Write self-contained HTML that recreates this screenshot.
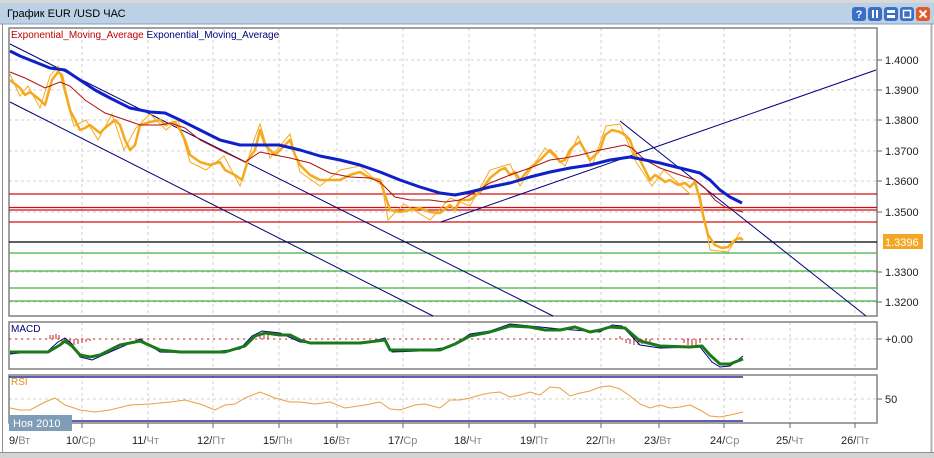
<!DOCTYPE html>
<html><head><meta charset="utf-8"><style>
body{margin:0;width:934px;height:458px;background:#fff;overflow:hidden;font-family:"Liberation Sans","DejaVu Sans",sans-serif}
</style></head><body>
<svg width="934" height="458" viewBox="0 0 934 458" xmlns="http://www.w3.org/2000/svg" style="position:absolute;left:0;top:0">
<rect x="0" y="0" width="934" height="458" fill="#fff"/>
<rect x="0" y="0" width="934" height="3" fill="#d8d8d8"/>
<rect x="0" y="3" width="934" height="21" fill="#bcd0e6"/>
<line x1="0" y1="24" x2="934" y2="24" stroke="#8aa2bc"/>
<text x="7" y="17" font-size="11" fill="#000" font-family="Liberation Sans, DejaVu Sans, sans-serif">График EUR /USD  ЧАС</text>
<g>
<rect x="852" y="7" width="14" height="14" rx="3" fill="#3a6fc8"/><text x="859" y="18" font-size="11" font-weight="bold" fill="#fff" text-anchor="middle">?</text>
<rect x="868" y="7" width="14" height="14" rx="3" fill="#3a6fc8"/><rect x="872" y="10" width="2" height="8" fill="#fff"/><rect x="876" y="10" width="2" height="8" fill="#fff"/>
<rect x="884" y="7" width="14" height="14" rx="3" fill="#3a6fc8"/><rect x="887" y="10" width="8" height="3" fill="#fff"/><rect x="887" y="15" width="8" height="3" fill="#fff"/>
<rect x="900" y="7" width="14" height="14" rx="3" fill="#3a6fc8"/><rect x="903.5" y="10.5" width="7" height="7" fill="none" stroke="#fff" stroke-width="1.5"/>
<rect x="916" y="7" width="14" height="14" rx="3" fill="#e05a2a"/><path d="M919.5 10.5 L926.5 17.5 M926.5 10.5 L919.5 17.5" stroke="#fff" stroke-width="2"/>
</g>
<line x1="931.5" y1="24" x2="931.5" y2="458" stroke="#b0b0b0" stroke-width="2"/>
<line x1="2.5" y1="24" x2="2.5" y2="452" stroke="#909090"/>
<rect x="0" y="452" width="934" height="6" fill="#d4d4d4"/>
<line x1="0" y1="452.5" x2="934" y2="452.5" stroke="#909090"/>

<g stroke="#d0d0d0" stroke-dasharray="3,3" stroke-width="1">
<path d="M82 28V316M148 28V316M213 28V316M279 28V316M337 28V316M403 28V316M469 28V316M535 28V316M601 28V316M659 28V316M724 28V316M790 28V316M855 28V316"/>
<path d="M82 322V369M148 322V369M213 322V369M279 322V369M337 322V369M403 322V369M469 322V369M535 322V369M601 322V369M659 322V369M724 322V369M790 322V369M855 322V369"/>
<path d="M82 375V423M148 375V423M213 375V423M279 375V423M337 375V423M403 375V423M469 375V423M535 375V423M601 375V423M659 375V423M724 375V423M790 375V423M855 375V423"/>
<path d="M9 60H877M9 90H877M9 120H877M9 151H877M9 181H877M9 212H877M9 242H877M9 272H877M9 302H877"/>
<path d="M9 339H877M9 399H877"/>
</g>
<g fill="none" stroke="#808080" stroke-width="1.5">
<rect x="9" y="28" width="868" height="288"/>
<rect x="9" y="322" width="868" height="47"/>
<rect x="9" y="375" width="868" height="48"/>
</g>
<g stroke="#666" stroke-width="1"><path d="M877 60h5M877 90h5M877 120h5M877 151h5M877 181h5M877 212h5M877 272h5M877 302h5M877 339h5M877 399h5"/>
<path d="M15 423v5M82 423v5M148 423v5M213 423v5M279 423v5M337 423v5M403 423v5M469 423v5M535 423v5M601 423v5M659 423v5M724 423v5M790 423v5M855 423v5"/></g>

<g stroke-width="1.3">
<path d="M9 194H877M9 207.5H877M9 210H877M9 222H877" stroke="#d01010"/>
<path d="M9 242H877" stroke="#000"/>
<path d="M9 253H877M9 271H877M9 288H877M9 301H877" stroke="#40b040"/>
</g>
<g stroke="#00007a" stroke-width="1" fill="none">
<path d="M10 44L553 316"/><path d="M10 102L433 316"/><path d="M441 222L876 70"/><path d="M620 121L866 316"/>
</g>

<polyline fill="none" stroke="#f5aa1e" stroke-width="2.5" stroke-linejoin="round" points="10,80 20,88 25,95 30,92 40,100 45,105 52,80 58,72 62,75 65,90 70,110 75,120 80,130 85,128 90,125 100,133 105,128 115,120 120,125 125,140 130,150 135,145 140,125 150,122 160,120 165,125 175,122 180,130 185,140 190,155 200,162 210,165 220,162 225,170 235,175 242,180 248,160 255,150 260,130 265,145 270,150 275,155 282,148 290,140 295,155 300,165 305,170 310,175 320,180 330,180 340,180 350,175 360,172 370,178 380,180 385,195 390,210 400,212 410,210 420,208 430,212 440,213 450,205 455,210 460,200 470,200 480,192 490,178 500,170 505,168 510,175 515,172 520,180 530,168 540,160 545,155 550,150 555,155 560,162 565,160 570,150 575,145 580,142 590,160 600,150 605,135 612,130 620,132 625,135 630,140 635,155 640,160 645,170 650,180 655,175 660,178 665,182 670,180 678,185 685,183 690,187 695,182 700,200 703,215 708,235 715,245 722,248 728,247 735,240 740,238 743,240"/>
<polyline fill="none" stroke="#f5aa1e" stroke-width="1" points="10,74 20,96 28,86 40,108 50,76 58,66 66,98 74,126 86,120 98,140 112,114 124,150 136,128 150,114 166,130 178,120 190,162 206,170 224,156 240,186 254,140 260,124 270,158 290,134 300,172 320,186 340,170 360,166 382,186 388,220 404,204 430,220 450,198 470,206 490,170 510,164 520,186 545,148 565,166 578,136 592,166 606,126 620,124 636,162 652,186 664,170 690,194 700,194 710,250 728,252 740,232"/>

<polyline fill="none" stroke="#b01010" stroke-width="1" points="10,72 25,78 45,88 60,82 70,86 85,100 105,113 120,118 140,125 160,125 170,123 185,128 200,140 220,150 245,162 260,152 275,155 290,158 310,163 330,173 350,177 370,178 380,182 395,197 410,200 430,200 445,202 460,200 470,195 490,183 510,175 530,168 550,160 565,158 580,155 600,150 615,147 625,145 632,148 645,160 660,168 680,175 695,180 705,188 715,200 725,207 735,210 743,212"/>
<polyline fill="none" stroke="#1020c8" stroke-width="3" stroke-linejoin="round" points="10,51 20,56 35,62 50,68 65,70 80,80 95,90 110,98 130,108 150,112 165,113 180,120 200,130 220,140 240,145 260,145 279,145 300,150 320,156 340,160 360,165 380,172 400,180 420,187 440,193 455,195 470,192 490,187 510,183 530,177 550,172 570,168 590,165 610,160 630,157 645,160 660,163 680,168 700,173 710,180 720,190 730,197 742,203"/>

<text x="11" y="38" font-size="10" fill="#c00000">Exponential_Moving_Average <tspan fill="#00007a">Exponential_Moving_Average</tspan></text>

<g font-size="11" fill="#222">
<text x="885" y="64">1.4000</text><text x="885" y="94">1.3900</text><text x="885" y="124">1.3800</text><text x="885" y="155">1.3700</text><text x="885" y="185">1.3600</text><text x="885" y="216">1.3500</text><text x="885" y="276">1.3300</text><text x="885" y="306">1.3200</text>
<text x="885" y="343">+0.00</text><text x="885" y="403">50</text>
</g>
<rect x="883" y="234" width="40" height="15" fill="#f5a623"/>
<text x="885" y="246" font-size="11" fill="#fff">1.3396</text>

<text x="11" y="332" font-size="10" fill="#00007a">MACD</text>
<g stroke="#c02020" stroke-width="1">
<path d="M50 335v4M53 335v4M56 334v5M59 335v4M62 339v3M66 339v5M70 339v6M74 339v6M78 339v5M82 339v4M86 339v3M90 339v2M260 334v5M264 333v6M268 334v5M620 336v3M626 339v4M630 339v5M634 339v6M638 339v6M642 339v5M646 339v4M650 339v3M684 339v4M688 339v6M692 339v7M696 339v6M700 339v4"/>
</g>
<path d="M9 339H743" stroke="#c02020" stroke-dasharray="2,4" stroke-width="1"/>
<polyline fill="none" stroke="#00007a" stroke-width="1" points="10,354 30,352 48,351 58,342 65,338 72,344 80,357 92,360 110,352 140,339 160,352 200,353 240,349 252,336 262,331 280,333 300,342 330,344 360,344 385,338 392,352 420,351 450,347 470,334 490,331 510,324 530,326 560,329 600,332 612,325 622,326 640,345 660,348 700,347 712,362 720,367 730,366 743,356"/>
<polyline fill="none" stroke="#1a7a1a" stroke-width="3" stroke-linejoin="round" points="10,352 30,352 48,352 60,345 65,341 72,346 80,355 90,357 100,355 110,350 120,345 140,341 160,350 180,352 225,352 245,346 255,336 265,333 280,335 290,335 300,340 310,343 360,343 385,340 390,350 440,350 455,344 470,336 490,332 510,326 530,327 545,330 560,330 575,327 590,332 600,330 610,327 625,328 640,341 660,346 690,347 702,346 710,355 720,364 730,364 735,362 743,359"/>

<text x="11" y="385" font-size="10" fill="#e09020">RSI</text>
<path d="M9 377H743M9 421H743" stroke="#00007a" stroke-width="1.2"/>
<polyline fill="none" stroke="#e8a040" stroke-width="1" points="10,408 20,410 30,410 45,402 55,398 65,405 80,410 95,412 110,410 130,405 150,404 170,402 185,400 200,404 215,410 225,405 235,404 245,398 250,396 260,392 275,398 290,402 300,402 315,404 330,402 345,408 365,405 380,402 390,409 400,410 415,405 425,404 440,408 450,400 460,400 470,398 480,395 490,393 500,392 510,397 520,395 530,392 540,395 550,387 560,388 570,396 580,393 590,391 600,387 610,386 620,389 630,396 640,404 650,408 660,405 670,408 680,407 690,405 700,410 710,416 720,417 730,415 743,412"/>
<rect x="9" y="415" width="63" height="16" fill="#7f9db6"/>
<text x="13" y="427" font-size="11" fill="#fff">Ноя 2010</text>

<g font-size="11" fill="#222">
<text x="9" y="444">9/<tspan fill="#888">Вт</tspan></text>
<text x="66" y="444">10/<tspan fill="#888">Ср</tspan></text>
<text x="132" y="444">11/<tspan fill="#888">Чт</tspan></text>
<text x="197" y="444">12/<tspan fill="#888">Пт</tspan></text>
<text x="263" y="444">15/<tspan fill="#888">Пн</tspan></text>
<text x="323" y="444">16/<tspan fill="#888">Вт</tspan></text>
<text x="388" y="444">17/<tspan fill="#888">Ср</tspan></text>
<text x="454" y="444">18/<tspan fill="#888">Чт</tspan></text>
<text x="520" y="444">19/<tspan fill="#888">Пт</tspan></text>
<text x="586" y="444">22/<tspan fill="#888">Пн</tspan></text>
<text x="644" y="444">23/<tspan fill="#888">Вт</tspan></text>
<text x="710" y="444">24/<tspan fill="#888">Ср</tspan></text>
<text x="776" y="444">25/<tspan fill="#888">Чт</tspan></text>
<text x="841" y="444">26/<tspan fill="#888">Пт</tspan></text>
</g>
</svg>
</body></html>
